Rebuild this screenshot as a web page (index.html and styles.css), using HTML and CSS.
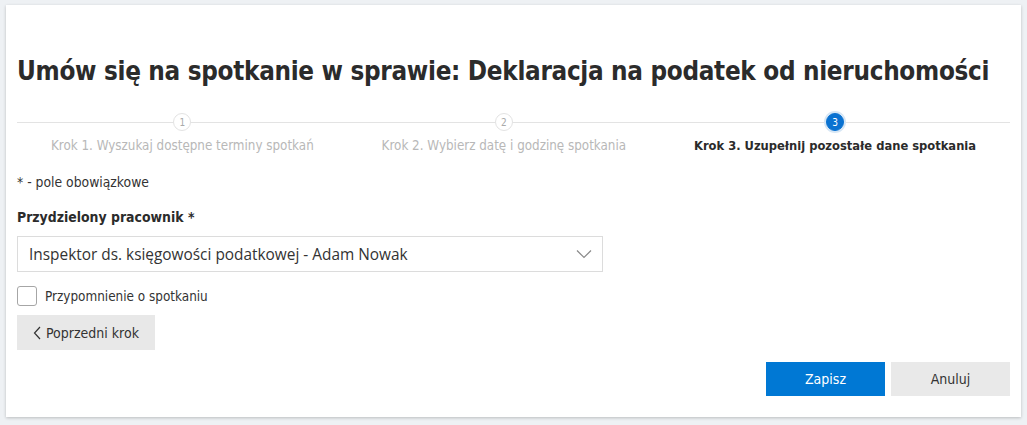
FILE: index.html
```html
<!DOCTYPE html>
<html lang="pl">
<head>
<meta charset="utf-8">
<link rel="stylesheet" href="styles.css">
</head>
<body>
<div class="card">
  <h1 class="title">Umów się na spotkanie w sprawie: Deklaracja na podatek od nieruchomości</h1>
  <div class="steps">
    <div class="step">
      <span class="dot">1</span>
      <span class="label">Krok 1. Wyszukaj dostępne terminy spotkań</span>
    </div>
    <div class="step">
      <span class="dot">2</span>
      <span class="label">Krok 2. Wybierz datę i godzinę spotkania</span>
    </div>
    <div class="step active">
      <span class="dot">3</span>
      <span class="label">Krok 3. Uzupełnij pozostałe dane spotkania</span>
    </div>
  </div>
  <p class="note">* - pole obowiązkowe</p>
  <label class="field-label">Przydzielony pracownik *</label>
  <div class="select">
    <span class="select-text">Inspektor ds. księgowości podatkowej - Adam Nowak</span>
    <svg class="chev" width="16" height="10" viewBox="0 0 16 10"><path d="M1 1.5 L8 8.5 L15 1.5" fill="none" stroke="#8a8a8a" stroke-width="1.2"/></svg>
  </div>
  <div class="check-row">
    <span class="checkbox"></span>
    <span class="check-label">Przypomnienie o spotkaniu</span>
  </div>
  <button class="btn btn-prev"><svg width="8" height="14" viewBox="0 0 8 14"><path d="M7 1 L1.5 7 L7 13" fill="none" stroke="#333" stroke-width="1.2"/></svg>Poprzedni krok</button>
  <div class="actions">
    <button class="btn btn-primary">Zapisz</button>
    <button class="btn btn-secondary">Anuluj</button>
  </div>
</div>
</body>
</html>
```

FILE: styles.css
```css
html, body {
  margin: 0;
  padding: 0;
}
body {
  background: #eef1f4;
  padding: 5px 6px 8px 6px;
  font-family: "DejaVu Sans Condensed", "DejaVu Sans", sans-serif;
  color: #333;
}
.card {
  background: #fff;
  box-shadow: 0 1px 3px rgba(0,0,0,0.22);
  padding: 44px 11px 20px 11px;
  height: 412px;
  box-sizing: border-box;
  display: flex;
  flex-direction: column;
}
.card > * {
  flex-shrink: 0;
}
.title {
  margin: 0;
  font-size: 25.8px;
  font-weight: bold;
  color: #2b2b2b;
  line-height: 44px;
  white-space: nowrap;
  letter-spacing: -0.3px;
}
.steps {
  display: flex;
  margin-top: 18px;
  position: relative;
}
.steps::before {
  content: "";
  position: absolute;
  left: 0;
  right: 0;
  top: 11px;
  height: 1px;
  background: #e3e3e3;
}
.step {
  flex: 1 1 auto;
  display: flex;
  flex-direction: column;
  align-items: center;
  position: relative;
}
.dot {
  width: 18px;
  height: 18px;
  border-radius: 50%;
  border: 1px solid #e3e3e3;
  background: #fff;
  font-size: 10px;
  color: #aaa;
  display: flex;
  align-items: center;
  justify-content: center;
  box-sizing: border-box;
  margin-top: 2px;
}
.label {
  font-size: 13.3px;
  color: #b8b8b8;
  margin-top: 7px;
}
.step.active .dot {
  background: #0a72d1;
  border-color: #0a72d1;
  color: #fff;
  box-shadow: 0 0 0 2px #d6e6f5;
}
.step.active .label {
  color: #2b2b2b;
  font-weight: bold;
  font-size: 12.8px;
}
.note {
  margin: 21px 0 0 0;
  font-size: 13.8px;
  color: #333;
}
.field-label {
  margin-top: 19px;
  font-size: 13.9px;
  font-weight: bold;
  color: #2b2b2b;
}
.select {
  margin-top: 11px;
  width: 586px;
  height: 36px;
  box-sizing: border-box;
  border: 1px solid #dcdcdc;
  display: flex;
  align-items: center;
  justify-content: space-between;
  padding: 0 10px 0 11px;
}
.select-text {
  font-family: "Open Sans", sans-serif;
  font-size: 15.4px;
  color: #333;
}
.check-row {
  margin-top: 14px;
  display: flex;
  align-items: center;
  gap: 8px;
}
.checkbox {
  width: 20px;
  height: 20px;
  box-sizing: border-box;
  border: 1px solid #a6a6a6;
  border-radius: 3px;
}
.check-label {
  font-size: 13.4px;
  color: #333;
}
.btn {
  border: none;
  font-family: "DejaVu Sans Condensed", "DejaVu Sans", sans-serif;
  font-size: 14px;
  color: #333;
  cursor: pointer;
}
.btn-prev {
  margin-top: 9px;
  align-self: flex-start;
  width: 138px;
  height: 35px;
  background: #e8e8e8;
  display: flex;
  align-items: center;
  gap: 5px;
  padding: 0 0 0 16px;
}
.actions {
  margin-top: 12px;
  display: flex;
  justify-content: flex-end;
  gap: 6px;
}
.btn-primary {
  width: 119px;
  height: 34px;
  background: #0078d4;
  color: #fff;
}
.btn-secondary {
  width: 119px;
  height: 34px;
  background: #e9e9e9;
}
```
